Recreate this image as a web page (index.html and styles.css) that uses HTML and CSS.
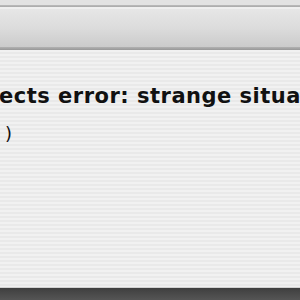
FILE: index.html
```html
<!DOCTYPE html>
<html>
<head>
<meta charset="utf-8">
<link rel="stylesheet" href="styles.css">
</head>
<body>
<div class="window">
  <div class="titlebar"></div>
  <div class="titleline"></div>
  <div class="toolbar"></div>
  <div class="toolline"></div>
  <div class="content">
    <p class="message">ects error: strange situation</p>
    <p class="detail">)</p>
  </div>
  <div class="bottomline"></div>
  <div class="statusbar"></div>
</div>
</body>
</html>
```
FILE: styles.css
```css
html, body {
  margin: 0;
  padding: 0;
  width: 300px;
  height: 300px;
  overflow: hidden;
}
.window {
  display: flex;
  flex-direction: column;
  width: 300px;
  height: 300px;
  overflow: hidden;
}
.titlebar {
  height: 5px;
  background: #e2e2e2;
}
.titleline {
  height: 2px;
  background: linear-gradient(#bcbcbc, #a9a9a9);
}
.toolbar {
  height: 40px;
  box-sizing: border-box;
  border-top: 2px solid #efefef;
  background: linear-gradient(#e6e6e6, #dcdcdc 50%, #cbcbcb);
}
.toolline {
  height: 3px;
  background: linear-gradient(#b2b2b2, #979797);
}
.content {
  flex: 1;
  min-height: 0;
  overflow: hidden;
  background: repeating-linear-gradient(#f1f1f1 0px, #f1f1f1 2px, #e9e9e9 2px, #e9e9e9 4px);
  font-family: "DejaVu Sans", "Liberation Sans", sans-serif;
  color: #111;
  padding-top: 34px;
}
.message {
  margin: 0 0 0 -1px;
  white-space: nowrap;
  font-weight: bold;
  font-size: 21px;
  line-height: 24px;
  letter-spacing: 0.5px;
}
.detail {
  margin: 15px 0 0 5px;
  font-size: 18px;
  line-height: 22px;
  white-space: nowrap;
}
.bottomline {
  height: 1px;
  background: #d2d2d2;
}
.statusbar {
  height: 12px;
  background: linear-gradient(#3f3f3f, #555555);
}
```
